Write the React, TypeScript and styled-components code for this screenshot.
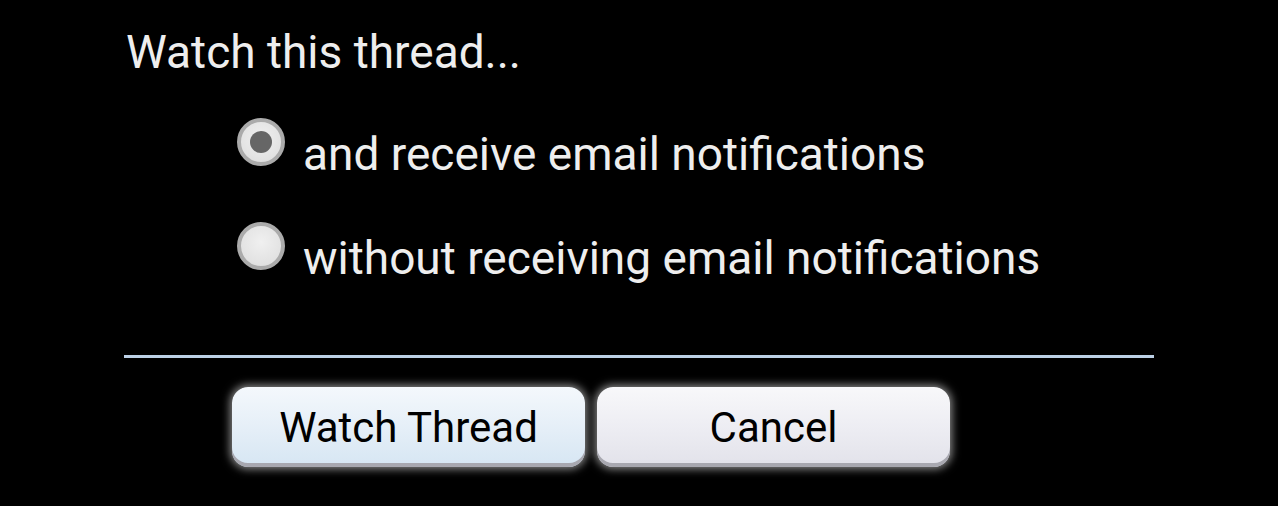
import React, { FC, useState } from 'react';
import styled, { createGlobalStyle } from 'styled-components';

const GlobalStyle = createGlobalStyle`
    html, body {
        margin: 0;
        padding: 0;
        background: #000;
    }
    body {
        font-family: Roboto, 'Noto Sans', sans-serif;
    }
`;

const options = [
    { id: 'email', label: 'and receive email notifications' },
    { id: 'silent', label: 'without receiving email notifications' },
];

const App: FC = () => {
    const [choice, setChoice] = useState('email');

    return (
        <>
            <GlobalStyle />
            <Dialog>
                <Title>Watch this thread...</Title>
                <OptionList>
                    {options.map((o) => (
                        <OptionRow key={o.id} onClick={() => setChoice(o.id)}>
                            <Radio checked={choice === o.id} />
                            <OptionLabel>{o.label}</OptionLabel>
                        </OptionRow>
                    ))}
                </OptionList>
                <Divider />
                <ButtonRow>
                    <DialogButton primary>Watch Thread</DialogButton>
                    <DialogButton>Cancel</DialogButton>
                </ButtonRow>
            </Dialog>
        </>
    );
};

const Dialog = styled.div`
    width: 1278px;
    height: 506px;
    box-sizing: border-box;
    padding: 24px 124px 0 124px;
    background: #000;
    color: #eeeeee;
`;

const Title = styled.div`
    font-size: 46px;
    line-height: 56px;
    padding-left: 2px;
`;

const OptionList = styled.div`
    display: flex;
    flex-direction: column;
    gap: 48px;
    margin-top: 46px;
    padding-left: 113px;
`;

const OptionRow = styled.label`
    display: flex;
    align-items: flex-start;
    gap: 18px;
    cursor: pointer;
`;

const Radio = styled.span<{ checked?: boolean }>`
    position: relative;
    flex: none;
    width: 48px;
    height: 48px;
    margin-top: -8px;
    box-sizing: border-box;
    border-radius: 50%;
    border: 4px solid #ababab;
    background: radial-gradient(circle at 50% 40%, #f0f0f0 0%, #e2e2e2 70%, #d4d4d4 100%);

    &::after {
        content: '';
        display: ${(p) => (p.checked ? 'block' : 'none')};
        position: absolute;
        left: 50%;
        top: 50%;
        width: 22px;
        height: 22px;
        margin: -11px 0 0 -11px;
        border-radius: 50%;
        background: #666;
    }
`;

const OptionLabel = styled.span`
    font-size: 46px;
    line-height: 56px;
`;

const Divider = styled.div`
    height: 3px;
    margin-top: 69px;
    width: 1030px;
    background: #bcd0e6;
`;

const ButtonRow = styled.div`
    display: flex;
    gap: 12px;
    margin-top: 29px;
    padding-left: 108px;
`;

const DialogButton = styled.button<{ primary?: boolean }>`
    width: 353px;
    height: 80px;
    border: none;
    border-radius: 16px;
    font-family: Roboto, 'Noto Sans', sans-serif;
    font-size: 42px;
    color: #000;
    cursor: pointer;
    background: ${(p) =>
        p.primary
            ? 'linear-gradient(to bottom, #f4f8fc 0%, #e4eef7 55%, #d6e6f3 100%)'
            : 'linear-gradient(to bottom, #f8f8fa 0%, #ececf2 55%, #e2e2ea 100%)'};
    box-shadow:
        inset 0 -4px 0 #a8a8b0,
        0 0 8px 2px rgba(255, 255, 255, 0.55);
`;

export default App;
